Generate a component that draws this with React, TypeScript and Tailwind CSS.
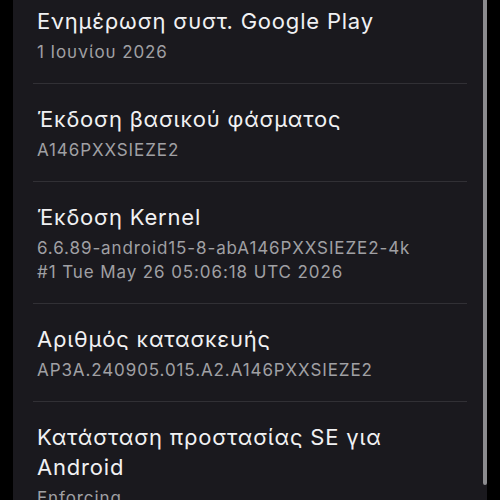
import React from "react";

const items = [
  { title: ["Ενημέρωση συστ. Google Play"], sub: ["1 Ιουνίου 2026"] },
  { title: ["Έκδοση βασικού φάσματος"], sub: ["A146PXXSIEZE2"] },
  {
    title: ["Έκδοση Kernel"],
    sub: ["6.6.89-android15-8-abA146PXXSIEZE2-4k", "#1 Tue May 26 05:06:18 UTC 2026"],
  },
  { title: ["Αριθμός κατασκευής"], sub: ["AP3A.240905.015.A2.A146PXXSIEZE2"] },
  { title: ["Κατάσταση προστασίας SE για", "Android"], sub: ["Enforcing"] },
];

export default function App() {
  return (
    <div className="flex h-[500px] w-[500px] overflow-hidden bg-black font-['Inter','Noto_Sans',sans-serif]">
      <div className="w-[13px] shrink-0 bg-black" />
      <div className="relative flex-1 overflow-hidden bg-[#1a191e]">
        {/* list, scrolled a bit */}
        <div className="-mt-[14px] px-[20px]">
          {items.map((it, i) => (
            <div key={i} className="border-b border-[#313035] px-[4px] pt-[20px] pb-[19px]">
              <div className="text-[22px] leading-[30px] tracking-[0.8px] text-[#f1f1f3]">
                {it.title.map((t, j) => (
                  <div key={j}>{t}</div>
                ))}
              </div>
              <div className="mt-[4px] text-[17px] leading-[24px] tracking-[0.9px] text-[#a0a0a4]">
                {it.sub.map((t, j) => (
                  <div key={j}>{t}</div>
                ))}
              </div>
            </div>
          ))}
        </div>
        {/* scrollbar */}
        <div className="absolute right-0 top-0 h-[485px] w-[4px] rounded-b-[2px] bg-[#8c8c8f]" />
      </div>
      <div className="w-[13px] shrink-0 bg-black" />
    </div>
  );
}
